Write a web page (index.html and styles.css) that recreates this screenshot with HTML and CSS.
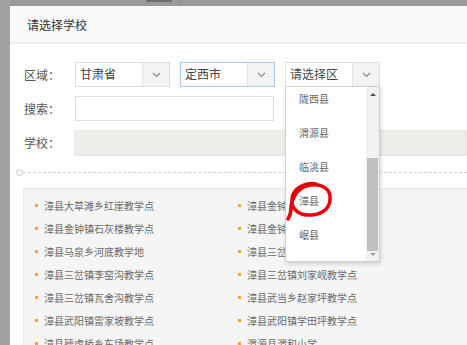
FILE: index.html
```html
<!DOCTYPE html>
<html>
<head>
    <title>请选择学校</title>
    <link rel="stylesheet" href="styles.css">
</head>
<body>
    <div class="backdrop-bar"><span class="backdrop-mark"></span><span class="backdrop-sep"></span></div>
    <div class="dialog">
        <div class="dialog-header">请选择学校</div>
        <div class="dialog-body">
            <div class="form-row">
                <span class="label">区域：</span>
                <div class="select">
                    <span class="select-text">甘肃省</span>
                    <span class="select-arrow"><svg width="9" height="6" viewBox="0 0 9 6"><path d="M1 1l3.5 3.5L8 1" fill="none" stroke="#888" stroke-width="1.2"/></svg></span>
                </div>
                <div class="select focused">
                    <span class="select-text">定西市</span>
                    <span class="select-arrow"><svg width="9" height="6" viewBox="0 0 9 6"><path d="M1 1l3.5 3.5L8 1" fill="none" stroke="#888" stroke-width="1.2"/></svg></span>
                </div>
                <div class="select open">
                    <span class="select-text">请选择区</span>
                    <span class="select-arrow"><svg width="9" height="6" viewBox="0 0 9 6"><path d="M1 1l3.5 3.5L8 1" fill="none" stroke="#888" stroke-width="1.2"/></svg></span>
                    <div class="dropdown">
                        <ul class="options">
                            <li>陇西县</li>
                            <li>渭源县</li>
                            <li>临洮县</li>
                            <li>漳县</li>
                            <li>岷县</li>
                        </ul>
                        <div class="scrollbar">
                            <span class="scroll-up"></span>
                            <span class="scroll-thumb"></span>
                            <span class="scroll-down"></span>
                        </div>
                        <svg class="marker" width="60" height="50" viewBox="0 0 60 50">
                            <path d="M30 4 C20 2 7 8 6 19 C5 30 14 36 26 35 C38 34 45 27 44 16 C43 6 30 2 18 7 C10 11 5 20 5 28 C5 33 4 36 2 39" fill="none" stroke="#e8000b" stroke-width="3.5" stroke-linecap="round"/>
                        </svg>
                    </div>
                </div>
            </div>
            <div class="form-row">
                <span class="label">搜索：</span>
                <div class="input"></div>
            </div>
            <div class="form-row">
                <span class="label">学校：</span>
                <div class="input disabled"></div>
            </div>
            <div class="divider">
                <span class="divider-dot"></span>
                <span class="divider-line"></span>
            </div>
            <div class="school-panel">
                <ul class="school-list">
                    <li>漳县大草滩乡红崖教学点</li>
                    <li>漳县金钟镇大石门教学点</li>
                    <li>漳县金钟镇石灰楼教学点</li>
                    <li>漳县金钟镇寺沟教学点</li>
                    <li>漳县马泉乡河底教学地</li>
                    <li>漳县三岔镇东山教学点</li>
                    <li>漳县三岔镇李窑沟教学点</li>
                    <li>漳县三岔镇刘家岘教学点</li>
                    <li>漳县三岔镇瓦舍沟教学点</li>
                    <li>漳县武当乡赵家坪教学点</li>
                    <li>漳县武阳镇雷家坡教学点</li>
                    <li>漳县武阳镇学田坪教学点</li>
                    <li>漳县殪虎桥乡东场教学点</li>
                    <li>渭源县渭和小学</li>
                </ul>
            </div>
        </div>
    </div>
</body>
</html>
```
FILE: styles.css
```css
body {
    margin: 0;
    overflow: hidden;
    background: #a2a2a2;
    font-family: "Noto Sans CJK SC", "Liberation Sans", sans-serif;
    width: 467px;
    height: 345px;
}
.backdrop-bar {
    height: 6px;
    margin-left: 10px;
    background: #9a9a9a;
    overflow: hidden;
    position: relative;
}
.backdrop-mark {
    position: absolute;
    left: 136px;
    top: 0;
    width: 26px;
    height: 2px;
    background: #6e6e6e;
}
.backdrop-sep {
    position: absolute;
    left: 170px;
    top: 0;
    width: 1px;
    height: 6px;
    background: #8a8a8a;
}
.dialog {
    margin-left: 10px;
    background: #fff;
    height: 339px;
    overflow: hidden;
}
.dialog-header {
    height: 36px;
    line-height: 38px;
    padding-left: 17px;
    font-size: 12px;
    color: #333;
    background: #f8f8f8;
    border-bottom: 2px solid #ececec;
}
.dialog-body {
    padding: 18px 0 0 14px;
}
.form-row {
    display: flex;
    align-items: center;
    height: 25px;
    margin-bottom: 9px;
}
.label {
    width: 51px;
    font-size: 12px;
    color: #555;
}
.select {
    position: relative;
    box-sizing: border-box;
    display: flex;
    width: 95px;
    height: 25px;
    margin-right: 10px;
    border: 1px solid #dedede;
    background: #fff;
}
.select.focused {
    border-color: #a9c9ec;
}
.select-text {
    flex: 1;
    padding-left: 4px;
    line-height: 22px;
    font-size: 12px;
    color: #444;
}
.select-arrow {
    width: 26px;
    display: flex;
    align-items: center;
    justify-content: center;
    background: #f3f3f3;
    border-left: 1px solid #e4e4e4;
}
.dropdown {
    position: absolute;
    top: 23px;
    left: -1px;
    width: 95px;
    height: 176px;
    box-sizing: border-box;
    border: 1px solid #d0d0d0;
    background: #fff;
    box-shadow: 1px 2px 4px rgba(0, 0, 0, 0.15);
    z-index: 2;
}
.options {
    list-style: none;
    margin: 0;
    padding: 4px 0 0 13px;
}
.options li {
    height: 34px;
    line-height: 16px;
    font-size: 10px;
    color: #666;
}
.scrollbar {
    position: absolute;
    top: 0;
    right: 0;
    width: 13px;
    height: 174px;
    background: #f1f1f1;
}
.scroll-up,
.scroll-down {
    position: absolute;
    left: 4px;
    width: 0;
    height: 0;
    border-left: 3px solid transparent;
    border-right: 3px solid transparent;
}
.scroll-up {
    top: 6px;
    border-bottom: 3px solid #505050;
}
.scroll-down {
    bottom: 5px;
    border-top: 3px solid #a3a3a3;
}
.scroll-thumb {
    position: absolute;
    top: 71px;
    left: 1px;
    width: 11px;
    height: 93px;
    background: #c1c1c1;
}
.marker {
    position: absolute;
    left: 0;
    top: 93px;
}
.input {
    box-sizing: border-box;
    width: 199px;
    height: 25px;
    border: 1px solid #dedede;
}
.input.disabled {
    width: 400px;
    height: 26px;
    background: #ededea;
    border-color: #e6e6e3;
}
.divider {
    display: flex;
    align-items: center;
    margin: 14px 0 0 -8px;
}
.divider-dot {
    width: 5px;
    height: 5px;
    border: 1px solid #c8c8c8;
    border-radius: 50%;
}
.divider-line {
    flex: 1;
    border-top: 1px dashed #cfcfcf;
}
.school-panel {
    margin-top: 12px;
    margin-left: -1px;
    height: 170px;
    background: #f5f5f5;
    border-top: 1px solid #e6e6e6;
    border-left: 1px solid #e9e9e9;
}
.school-list {
    list-style: none;
    margin: 0;
    padding: 8px 0 0 11px;
    display: grid;
    grid-template-columns: 203px 203px;
}
.school-list li {
    height: 23px;
    line-height: 18px;
    padding-left: 9px;
    position: relative;
    font-size: 10px;
    color: #6a6a6a;
}
.school-list li::before {
    content: "";
    position: absolute;
    left: 0;
    top: 7px;
    width: 3px;
    height: 3px;
    background: #f5a623;
}
```
